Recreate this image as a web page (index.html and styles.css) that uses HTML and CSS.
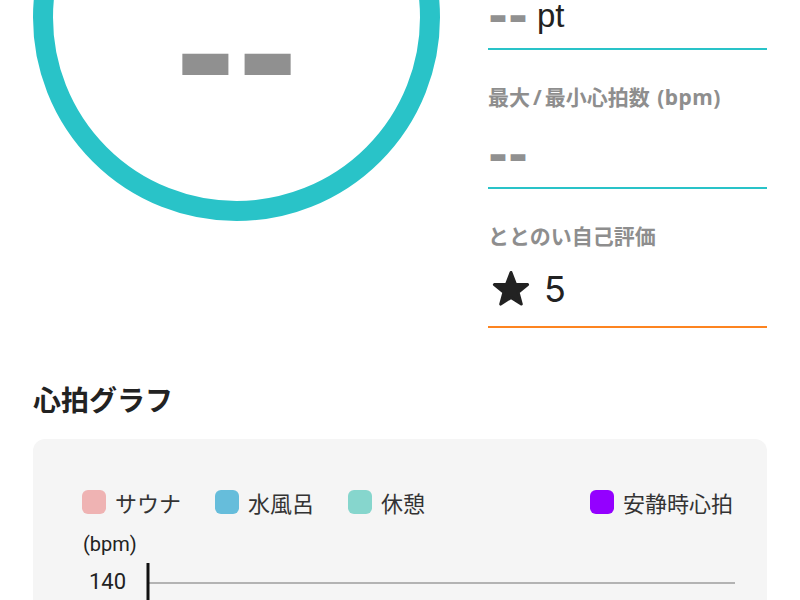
FILE: index.html
```html
<!DOCTYPE html>
<html lang="ja">
<head>
    <meta charset="UTF-8">
    <meta name="viewport" content="width=device-width, initial-scale=1.0">
    <title>セッション詳細</title>
    <link rel="stylesheet" href="styles.css">
</head>
<body>

<div class="summary">
    <div class="ring">
        <span class="ring-value dash">--</span>
    </div>

    <div class="stats">
        <div class="stat">
            <div class="stat-label">ととのいスコア</div>
            <div class="stat-value"><span class="dash">--</span> pt</div>
        </div>
        <div class="stat">
            <div class="stat-label">最大<span class="slash">/</span>最小心拍数 <span class="unit">(bpm)</span></div>
            <div class="stat-value"><span class="dash">--</span></div>
        </div>
        <div class="stat stat-rating">
            <div class="stat-label">ととのい自己評価</div>
            <div class="stat-value">
                <svg class="star" width="40" height="38" viewBox="0 -1 40 38">
                    <path d="M20 1.5 L24.5 13.2 L36.6 13.6 L27.1 21.3 L30.3 33.1 L20 26.4 L9.7 33.1 L12.9 21.3 L3.4 13.6 L15.5 13.2 Z"
                          fill="#222" stroke="#222" stroke-width="3" stroke-linejoin="round"/>
                </svg>
                <span>5</span>
            </div>
        </div>
    </div>
</div>

<h2 class="section-title">心拍グラフ</h2>

<div class="chart-card">
    <div class="legend">
        <div class="legend-item"><span class="swatch sauna"></span>サウナ</div>
        <div class="legend-item"><span class="swatch water"></span>水風呂</div>
        <div class="legend-item"><span class="swatch rest"></span>休憩</div>
        <div class="legend-item resting"><span class="swatch calm"></span>安静時心拍</div>
    </div>

    <svg class="chart" width="653" height="200" viewBox="0 0 653 200">
        <text x="1" y="21" class="axis-unit">(bpm)</text>
        <text x="44" y="59" class="axis-tick" text-anchor="end">140</text>
        <line x1="66" y1="53" x2="653" y2="53" stroke="#b3b3b3" stroke-width="2"/>
        <line x1="66" y1="33" x2="66" y2="200" stroke="#111" stroke-width="3"/>
    </svg>
</div>

</body>
</html>
```

FILE: styles.css
```css
body {
    margin: 0;
    padding: 0;
    background-color: #fff;
    color: #222;
    font-family: "Noto Sans CJK JP", sans-serif;
}

.summary {
    display: flex;
    gap: 48px;
    margin-top: -186px;
    padding: 0 33px;
}

.ring {
    width: 407px;
    height: 407px;
    box-sizing: border-box;
    border: 20px solid #29c3c8;
    border-radius: 50%;
    display: flex;
    justify-content: center;
    align-items: center;
    padding-top: 76px;
    flex-shrink: 0;
}

.dash {
    font-family: "DejaVu Sans", sans-serif;
    font-weight: bold;
    font-size: 48px;
    line-height: 1;
    color: #909090;
    vertical-align: -5px;
}

.ring-value {
    font-size: 150px;
}

.stats {
    width: 279px;
    padding-top: 97px;
}

.stat {
    border-bottom: 2px solid #29c3c8;
}

.stat-rating {
    border-bottom-color: #fd8420;
}

.stat-label {
    margin-top: 35px;
    margin-bottom: 14px;
    font-family: "Noto Sans", "Noto Sans CJK JP", sans-serif;
    font-size: 21px;
    line-height: 24px;
    font-weight: bold;
    color: #8e8e8e;
}

.slash {
    margin: 0 3px;
}

.unit {
    margin-left: 2px;
    letter-spacing: 0.5px;
}

.stat-value {
    height: 64px;
    line-height: 64px;
    font-family: "Liberation Sans", sans-serif;
    font-size: 33px;
    color: #222;
}

.stat-rating .stat-value {
    display: flex;
    align-items: center;
    gap: 13px;
    box-sizing: border-box;
    padding-bottom: 10px;
    font-family: Inter, sans-serif;
    font-size: 36px;
    line-height: 1;
}

.star {
    margin-left: 3px;
}

.section-title {
    margin: 51px 33px 20px;
    font-size: 28px;
    line-height: 40px;
    font-weight: bold;
    color: #222;
}

.chart-card {
    margin: 0 33px;
    padding: 51px 32px 0 49px;
    background-color: #f5f5f5;
    border-radius: 12px;
}

.legend {
    display: flex;
    gap: 34px;
    font-size: 22px;
    line-height: 24px;
    color: #333;
}

.legend-item {
    display: flex;
    align-items: center;
    gap: 9px;
}

.legend-item.resting {
    margin-left: auto;
    margin-right: 2px;
}

.swatch {
    width: 24px;
    height: 24px;
    border-radius: 6px;
}

.sauna { background-color: #efb3b3; }
.water { background-color: #66bddb; }
.rest { background-color: #86d6cd; }
.calm { background-color: #9400ff; }

.chart {
    display: block;
    margin-top: 16px;
}

.axis-unit,
.axis-tick {
    font-family: Roboto, sans-serif;
    fill: #222;
}

.axis-unit {
    font-size: 20px;
}

.axis-tick {
    font-size: 22px;
}
```
